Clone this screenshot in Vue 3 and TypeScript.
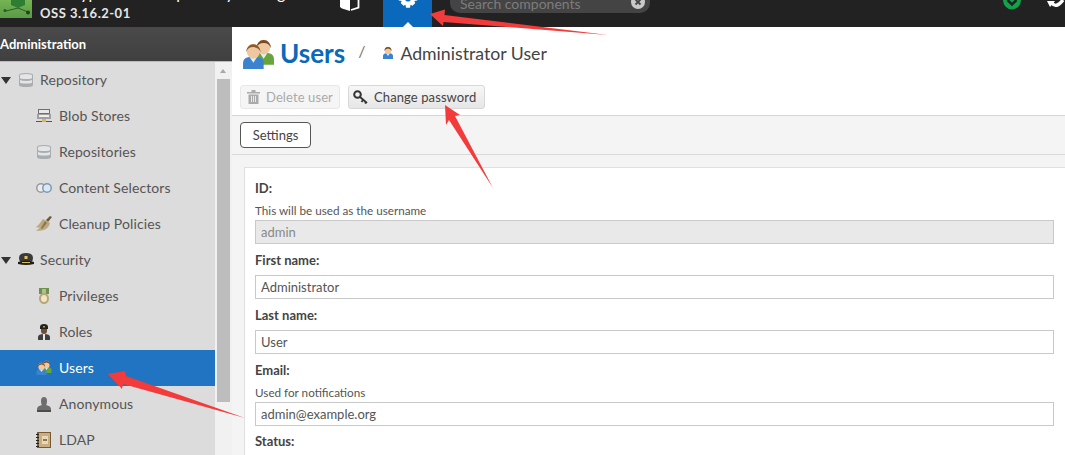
<script setup lang="ts">
interface Shape {
  d: string;
  fill: string;
}
interface NavRow {
  label: string;
  icon: string;
  group?: boolean;
  active?: boolean;
}
interface Field {
  label: string;
  help?: string;
  value?: string;
  readonly?: boolean;
}

const person = (x: number, y: number, hair: string, shirt: string): Shape[] => [
  { d: `M${x - 5} ${y + 12}v-3q0-3 5-3t5 3v3z`, fill: shirt },
  { d: `M${x - 2} ${y + 6}l2 3 2-3z`, fill: "#dff0fb" },
  { d: `M${x - 3.2} ${y + 3.4}a3.2 3.6 0 1 1 6.4 0a3.2 3.6 0 1 1-6.4 0z`, fill: "#f0c8a0" },
  { d: `M${x - 3.6} ${y + 4}a3.6 4 0 0 1 7.2 0q-1-2.600-3.6-2.600t-3.600 2.600z`, fill: hair },
];

const icons: Record<string, Shape[]> = {
  db: [
    { d: "M1 3q0-2 7-2t7 2v10q0 2-7 2t-7-2z", fill: "#a9adb0" },
    { d: "M2 3.500q0-1.500 6-1.500t6 1.500v2.500q0 1-6 1t-6-1z", fill: "#e4e5e6" },
    { d: "M2 8q2 1 6 1t6-1v2.500q0 1-6 1t-6-1z", fill: "#e4e5e6" },
  ],
  blob: [
    { d: "M2 1h12v8H2z", fill: "#6f6f6f" },
    { d: "M3 2h10v3H3z", fill: "#e8e8e8" },
    { d: "M1 6h14v5H1z", fill: "#a0a0a0" },
    { d: "M3 7h10v2H3z", fill: "#eee" },
    { d: "M0 13h16v1H0z", fill: "#555" },
    { d: "M6 11h4v3H6z", fill: "#e2b64c" },
  ],
  selectors: [
    { d: "M0 8a5 5 0 1 1 10 0a5 5 0 1 1-10 0z", fill: "#9a9a9a" },
    { d: "M1.500 8a3.500 3.500 0 1 1 7 0a3.500 3.500 0 1 1-7 0z", fill: "#ececec" },
    { d: "M6 8a5 5 0 1 1 10 0a5 5 0 1 1-10 0z", fill: "#7d99b5" },
    { d: "M7.500 8a3.500 3.500 0 1 1 7 0a3.500 3.500 0 1 1-7 0z", fill: "#d9e8f5" },
  ],
  broom: [
    { d: "M10 4l4-4 2 1-4 5z", fill: "#6b5a3a" },
    { d: "M7 3l7 4q-1 5-6 7-4 1-8 1 3-2 4-4-2 1-4 0 3-2 4-4z", fill: "#bca97f" },
    { d: "M9 5l2 2-5 6-1-1z", fill: "#8a7650" },
  ],
  hat: [
    { d: "M1 6q0-5 7-5t7 5q0 3-2 4H3Q1 9 1 6z", fill: "#3a3a3a" },
    { d: "M0 10q8-3 16 0v2q-8 2-16 0z", fill: "#1f1f1f" },
    { d: "M6.500 4h3v3h-3z", fill: "#e3c25c" },
    { d: "M4 10h8v1H4z", fill: "#d8b84f" },
  ],
  medal: [
    { d: "M3 0h10v6H3z", fill: "#6f8f4e" },
    { d: "M6 1h4v5H6z", fill: "#a9c488" },
    { d: "M3 10.500a5 5.500 0 1 1 10 0a5 5.500 0 1 1-10 0z", fill: "#b7a67a" },
    { d: "M5 10.500a3 3.500 0 1 1 6 0a3 3.500 0 1 1-6 0z", fill: "#f0e6c4" },
  ],
  officer: [
    { d: "M2 16v-3q0-3 6-3t6 3v3z", fill: "#3f3f3f" },
    { d: "M7 10h2v6H7z", fill: "#e8e8e8" },
    { d: "M5 5h6v2q0 3-3 3T5 7z", fill: "#6e4d35" },
    { d: "M4 3q0-3 4-3t4 3v2H4z", fill: "#222" },
    { d: "M7.200 2h1.600v1.500H7.200z", fill: "#d8b84f" },
  ],
  users: [
    ...person(10.5, 1, "#7a4a25", "#67a53c"),
    ...person(5.5, 3, "#8a5a2b", "#3b83cf"),
  ],
  user: person(8, 2, "#7a4a25", "#3b83cf"),
  anon: [
    { d: "M5 5a3 4 0 1 1 6 0q0 3-1 4 5 1 5 4v1H1v-1q0-3 5-4-1-1-1-4z", fill: "#6d6d6d" },
    { d: "M1 14h14v2H1z", fill: "#4c4c4c" },
  ],
  ldap: [
    { d: "M1 0h14v16H1z", fill: "#7a5a34" },
    { d: "M3 1h11v14H3z", fill: "#c9ae82" },
    { d: "M6 4h6v8H6z", fill: "#e7d8ba" },
    { d: "M0 2h3v1H0zM0 5h3v1H0zM0 8h3v1H0zM0 11h3v1H0zM0 14h3v1H0z", fill: "#222" },
    { d: "M7 7h4v2H7z", fill: "#8a7650" },
  ],
};

const navRows: NavRow[] = [
  { label: "Repository", icon: "db", group: true },
  { label: "Blob Stores", icon: "blob" },
  { label: "Repositories", icon: "db" },
  { label: "Content Selectors", icon: "selectors" },
  { label: "Cleanup Policies", icon: "broom" },
  { label: "Security", icon: "hat", group: true },
  { label: "Privileges", icon: "medal" },
  { label: "Roles", icon: "officer" },
  { label: "Users", icon: "users", active: true },
  { label: "Anonymous", icon: "anon" },
  { label: "LDAP", icon: "ldap" },
];

const fields: Field[] = [
  { label: "ID:", help: "This will be used as the username", value: "admin", readonly: true },
  { label: "First name:", value: "Administrator" },
  { label: "Last name:", value: "User" },
  { label: "Email:", help: "Used for notifications", value: "admin@example.org" },
  { label: "Status:" },
];
</script>

<template>
  <div class="app">
    <header class="topbar">
      <div class="brand">
        <div class="logo">
          <svg width="32" height="18" viewBox="0 0 32 18">
            <path d="M11 0h14v5l-7 3-7-3z" fill="#2f7d32" />
            <path d="M18 8l-12 3M18 8l10 4" stroke="#2c5a22" stroke-width="1" fill="none" />
            <circle cx="5" cy="10.500" r="1.500" fill="#2c5a22" />
            <circle cx="28" cy="12.500" r="2" fill="#24421c" />
          </svg>
        </div>
        <div class="brand-text">
          <div class="brand-name">Sonatype Nexus Repository Manager</div>
          <div class="brand-version">OSS 3.16.2-01</div>
        </div>
      </div>
      <div class="nav-box">
        <svg width="20" height="12" viewBox="0 0 20 12">
          <path d="M0 0h10v11L2 8.500 0 7z" fill="#fff" />
          <path d="M11 10l7.500-2.500V0" fill="none" stroke="#fff" stroke-width="1.800" />
        </svg>
      </div>
      <div class="nav-gear">
        <svg class="gear" width="20" height="20" viewBox="0 0 20 20">
          <path
            d="M8 0h4l.5 3 2-.9 2.800 2.800-1 2 3 .6v4l-3 .5 1 2-2.800 2.800-2-1-.5 3H8l-.5-3-2 1-2.800-2.800 1-2-3-.5V7.500l3-.6-1-2L5.500 2.100l2 .9z"
            fill="#fff"
          />
          <circle cx="10" cy="9.500" r="3" fill="#0a68bd" />
        </svg>
        <span class="caret"></span>
      </div>
      <div class="search">
        <span class="search-text">Search components</span>
        <span class="search-clear">
          <svg width="14" height="14" viewBox="0 0 14 14">
            <circle cx="7" cy="7" r="7" fill="#c9c9c9" />
            <path d="M4.500 4.500l5 5M9.500 4.500l-5 5" stroke="#444" stroke-width="1.800" />
          </svg>
        </span>
      </div>
      <div class="status">
        <svg width="18" height="10" viewBox="0 0 18 10">
          <path d="M0 0h18a9 9.500 0 0 1-18 0z" fill="#12a24a" />
          <path d="M4.500 0l4.500 4.500L13.500 0" stroke="#222" stroke-width="2.600" fill="none" />
        </svg>
      </div>
      <div class="refresh">
        <svg width="18" height="10" viewBox="0 0 18 10">
          <path d="M5 3q4 6 11-3" stroke="#fff" stroke-width="3.400" fill="none" />
          <path d="M0 1h8L3 7z" fill="#fff" />
        </svg>
      </div>
    </header>

    <div class="body">
      <aside class="sidebar">
        <div class="sidebar-title">Administration</div>
        <div class="sidebar-body">
          <ul class="tree">
            <li
              v-for="row in navRows"
              :key="row.label"
              class="tree-row"
              :class="{ 'tree-row--group': row.group, 'tree-row--active': row.active }"
            >
              <span v-if="row.group" class="expander"></span>
              <svg class="tree-icon" width="16" height="16" viewBox="0 0 16 16">
                <path v-for="(s, i) in icons[row.icon]" :key="i" :d="s.d" :fill="s.fill" />
              </svg>
              <span class="tree-label">{{ row.label }}</span>
            </li>
          </ul>
          <div class="scrollbar">
            <span class="scroll-up"></span>
            <div class="scroll-thumb"></div>
          </div>
        </div>
      </aside>

      <main class="main">
        <div class="head">
          <div class="crumbs">
            <svg width="33" height="31" viewBox="0 0 16 15">
              <path v-for="(s, i) in icons.users" :key="i" :d="s.d" :fill="s.fill" />
            </svg>
            <h1>Users</h1>
            <span class="slash">/</span>
            <svg class="crumb-user" width="14" height="16" viewBox="1 1 14 14">
              <path v-for="(s, i) in icons.user" :key="i" :d="s.d" :fill="s.fill" />
            </svg>
            <span class="crumb-name">Administrator User</span>
          </div>
          <div class="actions">
            <button class="btn btn--disabled" type="button">
              <svg width="13" height="14" viewBox="0 0 13 14">
                <path d="M0 2h13v1.500H0zM4.500 0h4v2h-4zM1.500 4.500h10V14h-10z" fill="#aaa" />
                <path d="M4 6h1v6H4zM6 6h1v6H6zM8 6h1v6H8z" fill="#e8e8e8" />
              </svg>
              Delete user
            </button>
            <button class="btn" type="button">
              <svg width="16" height="14" viewBox="0 0 16 14">
                <circle cx="4.500" cy="4.500" r="3.300" fill="none" stroke="#333" stroke-width="2" />
                <path d="M7 7l7 6M10 10l-1.500 2M13 12l-1 1.500" stroke="#333" stroke-width="1.800" fill="none" />
              </svg>
              Change password
            </button>
          </div>
        </div>
        <div class="tabs">
          <button class="tab" type="button">Settings</button>
        </div>
        <div class="content">
          <form class="panel">
            <div v-for="f in fields" :key="f.label" class="field">
              <label>{{ f.label }}</label>
              <div v-if="f.help" class="help">{{ f.help }}</div>
              <input
                v-if="f.value"
                :value="f.value"
                :readonly="f.readonly"
                :class="{ 'input--readonly': f.readonly }"
              />
            </div>
          </form>
        </div>
      </main>
    </div>

    <svg class="arrows" width="1065" height="455" viewBox="0 0 1065 455">
      <path d="M430 14L445 9.500l-.5 5.500L608 35 443.500 22l-.5 4z" fill="#f33b3b" />
      <path d="M445 105l15 10-5 1 38 72-44-68-3 5z" fill="#f33b3b" />
      <path d="M108 374l17-3 1 5 119 42-122-34-1 5z" fill="#f33b3b" />
    </svg>
  </div>
</template>

<style scoped>
.app {
  position: relative;
  width: 1065px;
  height: 455px;
  overflow: hidden;
  display: flex;
  flex-direction: column;
  font-family: Lato, "Open Sans", sans-serif;
  font-size: 13px;
  color: #444;
}

.topbar {
  flex: none;
  height: 27px;
  background: #222;
  display: flex;
  overflow: hidden;
  position: relative;
}

.brand {
  width: 340px;
  flex: none;
  display: flex;
  position: relative;
}

.logo {
  width: 32px;
  height: 18px;
  background: linear-gradient(#74b452, #5a9b48);
}

.logo svg {
  display: block;
}

.brand-text {
  margin-left: 8px;
  color: #e6e6e6;
}

.brand-name {
  font-size: 16px;
  line-height: 18px;
  color: #fff;
  white-space: nowrap;
  margin-top: -16px;
}

.brand-version {
  margin-top: 3px;
  font-size: 13px;
  font-weight: 700;
  line-height: 16px;
  letter-spacing: 0.5px;
}

.nav-box {
  width: 43px;
  flex: none;
}

.nav-box svg {
  display: block;
}

.nav-gear {
  width: 49px;
  flex: none;
  background: #0a68bd;
  position: relative;
}

.gear {
  position: absolute;
  left: 15px;
  top: -11px;
}

.caret {
  position: absolute;
  left: 20px;
  bottom: 0;
  border-left: 5px solid transparent;
  border-right: 5px solid transparent;
  border-bottom: 5px solid #fff;
}

.search {
  margin-left: 18px;
  width: 200px;
  height: 13px;
  flex: none;
  background: #444;
  border-radius: 0 0 10px 10px;
  position: relative;
  overflow: hidden;
}

.search-text {
  position: absolute;
  left: 10px;
  top: -5px;
  font-size: 14px;
  line-height: 18px;
  color: #7c7c7c;
  white-space: nowrap;
}

.search-clear {
  position: absolute;
  left: 181px;
  top: -5px;
}

.status {
  margin-left: 353px;
  flex: none;
  line-height: 0;
}

.refresh {
  margin-left: 26px;
  flex: none;
  line-height: 0;
}

.body {
  flex: 1;
  display: flex;
  min-height: 0;
}

.sidebar {
  width: 232px;
  flex: none;
  display: flex;
  flex-direction: column;
  background: #f1f1f1;
}

.sidebar-title {
  height: 34px;
  flex: none;
  background: linear-gradient(#4a4a4a, #404040);
  border-bottom: 1px solid #bbb;
  color: #fff;
  font-weight: 700;
  font-size: 13px;
  line-height: 35px;
  box-sizing: content-box;
}

.sidebar-body {
  flex: 1;
  display: flex;
  min-height: 0;
}

.tree {
  width: 215px;
  flex: none;
  margin: 0;
  padding: 0;
  list-style: none;
  background: #dcdcdc;
}

.tree-row {
  height: 36px;
  padding-left: 36px;
  display: flex;
  align-items: center;
  gap: 7px;
  font-size: 14px;
  letter-spacing: 0.1px;
  color: #555;
}

.tree-label {
  margin-top: -2px;
}

.tree-row--group {
  padding-left: 1px;
  gap: 0;
}

.tree-row--group .tree-icon {
  margin: 0 6px 0 7px;
}

.tree-row--active {
  background: #2174c1;
  color: #fff;
}

.expander {
  width: 0;
  height: 0;
  border-left: 5px solid transparent;
  border-right: 5px solid transparent;
  border-top: 7px solid #333;
}

.scrollbar {
  flex: 1;
  padding: 0 2px;
  position: relative;
}

.scroll-up {
  position: absolute;
  left: 5px;
  top: 7px;
  border-left: 3.5px solid transparent;
  border-right: 3.5px solid transparent;
  border-bottom: 4px solid #a8a8a8;
}

.scroll-thumb {
  margin-top: 17px;
  height: 323px;
  background: #bdbdbd;
}

.main {
  flex: 1;
  min-width: 0;
  display: flex;
  flex-direction: column;
  background: #f4f4f4;
}

.head {
  height: 89px;
  flex: none;
  box-sizing: border-box;
  background: #fff;
  border-bottom: 1px solid #d6d6d6;
  padding: 11px 8px 0;
}

.crumbs {
  display: flex;
  align-items: center;
  height: 30px;
  padding-left: 2px;
}

h1 {
  margin: 0 0 0 5px;
  font-size: 26px;
  font-weight: 700;
  line-height: 30px;
  color: #0a69b8;
}

.slash {
  margin-left: 13px;
  font-size: 16px;
  color: #777;
  margin-top: -6px;
}

.crumb-user {
  margin-left: 16px;
}

.crumb-name {
  margin-left: 5px;
  font-size: 17.7px;
  color: #444;
}

.actions {
  display: flex;
  gap: 8px;
  margin-top: 17px;
}

.btn {
  height: 24px;
  padding: 0 8px 0 4px;
  display: inline-flex;
  align-items: center;
  gap: 5px;
  font: inherit;
  font-size: 13px;
  letter-spacing: 0.1px;
  white-space: nowrap;
  color: #444;
  background: linear-gradient(#f7f7f7, #e6e6e6);
  border: 1px solid #d8d8d8;
  border-radius: 3px;
}

.btn--disabled {
  width: 100px;
  padding-left: 6px;
  padding-right: 0;
  gap: 6px;
  color: #aaa;
  background: #f5f5f5;
  border-color: #e8e8e8;
}

.tabs {
  height: 39px;
  flex: none;
  box-sizing: border-box;
  border-bottom: 1px solid #d9d9d9;
  padding: 6px 8px 0;
}

.tab {
  width: 71px;
  height: 26px;
  font: inherit;
  font-size: 13px;
  color: #444;
  background: #fff;
  border: 1px solid #555;
  border-radius: 4px;
  padding: 0;
}

.content {
  flex: 1;
  min-height: 0;
  padding: 12px 0 0 12px;
}

.panel {
  height: 100%;
  box-sizing: border-box;
  background: #fff;
  border: 1px solid #e0e0e0;
  border-right: none;
  border-bottom: none;
  padding: 12px 11px 0 10px;
}

.field {
  margin-bottom: 8px;
}

.field:nth-child(4) {
  margin-bottom: 7px;
}

label {
  display: block;
  font-size: 13px;
  font-weight: 700;
  line-height: 16px;
  color: #444;
  margin-bottom: 7px;
}

.help {
  font-size: 11.7px;
  line-height: 14px;
  color: #555;
  margin-top: 7px;
  margin-bottom: 3px;
}

input {
  display: block;
  width: 100%;
  height: 24px;
  box-sizing: border-box;
  padding: 0 5px;
  font: inherit;
  font-size: 13px;
  color: #555;
  background: #fff;
  border: 1px solid #c9c9c9;
  border-radius: 0;
  outline: none;
}

.input--readonly {
  background: #e9e9e9;
  color: #888;
}

.arrows {
  position: absolute;
  left: 0;
  top: 0;
  pointer-events: none;
}
</style>
